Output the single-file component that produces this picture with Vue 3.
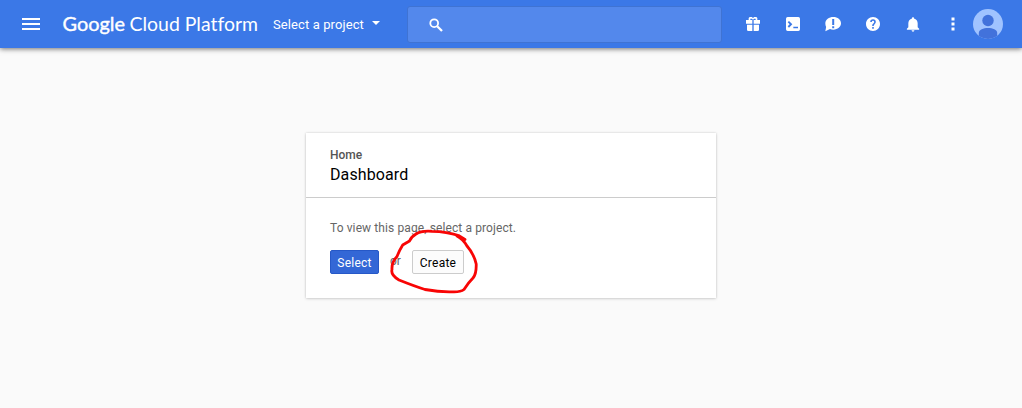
<script setup>
const actions = [
  { name: 'Gifts', path: 'M1.500 6H11v5.500H1.500zM13 6h9.500v5.500H13zM3 13h8v9.500H5a2 2 0 0 1-2-2zM13 13h8v7.500a2 2 0 0 1-2 2h-6zM5.500 6V3l1.500-1.500h3.500L12 3.500l1.500-2H17L18.500 3v3H16V4h-2.200L12 5.800 10.200 4H8v2z' },
  { name: 'Cloud Shell', path: 'M4 1.500h16A2.500 2.500 0 0 1 22.500 4v16a2.500 2.500 0 0 1-2.500 2.500H4A2.500 2.500 0 0 1 1.500 20V4A2.500 2.500 0 0 1 4 1.500zM4 9.500 7 12.500l-3 3 2 2 5-5-5-5zM12.500 16v2.500h7V16z' },
  { name: 'Feedback', path: 'M12.500 1.500C19 1.500 24 5.500 24 11s-5 9.500-11.500 9.500c-1.800 0-3.600-.2-5-.9L.5 23l1.200-6.500C.800 15 .5 13.200.5 11c0-5.500 5.500-9.500 12-9.500zM10.800 4.500v9h3v-9zM10.800 15.300v3h3v-3z' },
  { name: 'Help', path: 'M12 1.500C6.200 1.500 1.500 6.200 1.500 12S6.200 22.500 12 22.500 22.500 17.800 22.500 12 17.800 1.500 12 1.500zm1.200 17.500h-2.400v-2.400h2.400V19zm2.100-7.700-.9.900c-.8.800-1.200 1.400-1.200 2.800h-2.400v-.5c0-1.100.4-2.100 1.200-2.800l1.200-1.300c.4-.3.600-.8.600-1.400a1.800 1.800 0 0 0-3.600 0H7.800a4.200 4.200 0 1 1 8.400 0c0 .900-.4 1.700-.9 2.300z' },
  { name: 'Notifications', path: 'M12 23.500a2.200 2.200 0 0 0 2.200-2H9.800A2.200 2.200 0 0 0 12 23.500zM19 17v-6c0-3.400-2.100-6-5.200-6.800V3.500a1.800 1.800 0 0 0-3.600 0v.7C7.100 5 5 7.600 5 11v6l-2.200 2v1.500h18.400V19z' },
]
</script>

<template>
  <div class="page">
    <header class="topbar">
      <svg class="menu" viewBox="0 0 18 12" shape-rendering="crispEdges">
        <path d="M0 0h18v2H0zM0 5h18v2H0zM0 10h18v2H0z" fill="#fff" />
      </svg>
      <svg class="brand" viewBox="0 0 198 40">
        <text class="google" x=".5" y="26.500" textLength="62.500" lengthAdjust="spacingAndGlyphs">Google</text>
        <text class="cloud" x="67.500" y="26.500" textLength="128.500" lengthAdjust="spacingAndGlyphs">Cloud Platform</text>
      </svg>
      <div class="project">Select a project<span class="caret"></span></div>
      <div class="search">
        <svg viewBox="0 0 14 14">
          <circle cx="5.200" cy="5.200" r="3.900" fill="none" stroke="#fff" stroke-width="1.800" />
          <path d="M8.200 8.200 13 13" stroke="#fff" stroke-width="2.300" />
        </svg>
      </div>
      <nav class="actions">
        <svg v-for="a in actions" :key="a.name" viewBox="0 0 24 24" :aria-label="a.name">
          <path :d="a.path" fill="#fff" fill-rule="evenodd" />
        </svg>
      </nav>
      <svg class="more" viewBox="0 0 4 14">
        <path d="M.5.500h3v3h-3zM.5 5.500h3v3h-3zM.5 10.500h3v3h-3z" fill="#fff" />
      </svg>
      <svg class="avatar" viewBox="0 0 30 30">
        <defs><clipPath id="face"><circle cx="15" cy="15" r="15" /></clipPath></defs>
        <g clip-path="url(#face)">
          <path d="M0 0h30v30H0z" fill="#a0c3ff" />
          <circle cx="15" cy="11.500" r="5.700" fill="#4272db" />
          <path d="M5.800 30v-6c0-3.500 4.600-5 9.200-5s9.200 1.500 9.200 5v6z" fill="#4272db" />
        </g>
      </svg>
    </header>

    <main class="card">
      <div class="heading">
        <div class="crumb">Home</div>
        <h1>Dashboard</h1>
      </div>
      <div class="content">
        <p>To view this page, select a project.</p>
        <div class="buttons">
          <button class="primary">Select</button>
          <span class="or">or</span>
          <button class="secondary">Create</button>
        </div>
      </div>
      <svg class="mark" viewBox="0 0 110 80">
        <path d="M85 17.500 78.500 13.500Q67 9.500 52 9.300 41 8.500 36 12 31 15 29.500 19L22.700 23Q19 29 17 34.500 11.500 40 12 47.500 10.500 53 19 58 34 64 45 67.500 59 70 71 69.800 80 70.500 84 67.500 88 61 93 56 96.500 52 96.200 42 94 32 87 24 83 17 77 14" />
      </svg>
    </main>
  </div>
</template>

<style scoped>
.page {
  height: 408px;
  overflow: hidden;
  background: #fafafa;
  font-family: Roboto, sans-serif;
}
.topbar {
  position: relative;
  box-sizing: border-box;
  display: flex;
  align-items: center;
  height: 48px;
  padding-left: 22px;
  background: #3b78e7;
  color: #fff;
  box-shadow: 0 1px 5px rgba(0, 0, 0, 0.55);
}
.topbar > * {
  flex: none;
}
.menu {
  width: 18px;
  height: 12px;
}
.brand {
  width: 198px;
  height: 40px;
  margin-left: 22px;
  overflow: visible;
  fill: #fff;
  font-family: Lato, sans-serif;
  font-size: 20px;
  font-variant-ligatures: none;
}
.google {
  font-weight: 400;
  stroke: #fff;
  stroke-width: 0.4px;
}
.cloud {
  font-weight: 400;
}
.project {
  display: flex;
  align-items: center;
  width: 107px;
  margin-left: 13px;
  padding-top: 2px;
  font-size: 13px;
  letter-spacing: 0.1px;
  line-height: 18px;
  white-space: nowrap;
}
.caret {
  margin: -4px 0 0 8px;
  border: 4px solid transparent;
  border-top-color: #fff;
  border-bottom: 0;
}
.search {
  box-sizing: border-box;
  display: flex;
  align-items: center;
  width: 315px;
  height: 37px;
  margin-left: 27px;
  padding: 1px 0 0 21px;
  border: 1px solid #3f73d3;
  border-radius: 3px;
  background: #5388ec;
}
.search svg {
  width: 14px;
  height: 14px;
}
.actions {
  display: flex;
  gap: 24px;
  margin-left: 23px;
}
.actions svg {
  width: 16px;
  height: 16px;
}
.more {
  width: 4px;
  height: 14px;
  margin-left: 29.500px;
}
.avatar {
  width: 30px;
  height: 30px;
  margin-left: 18.500px;
}
.card {
  position: relative;
  width: 410px;
  height: 165px;
  margin: 85px 0 0 306px;
  background: #fff;
  box-shadow: 0 0 2px rgba(0, 0, 0, 0.16), 0 1px 3px rgba(0, 0, 0, 0.13);
}
.heading {
  box-sizing: border-box;
  height: 65px;
  padding: 14px 24px 0;
  border-bottom: 1px solid #ccc;
}
.crumb {
  color: #555;
  font-size: 12px;
  font-weight: 500;
  line-height: 16px;
}
h1 {
  margin: 2px 0 0;
  color: #000;
  font-size: 16px;
  font-weight: 400;
  letter-spacing: 0.1px;
  line-height: 20px;
}
.content {
  padding: 22px 24px 0;
  color: #666;
  font-size: 12px;
}
p {
  margin: 0 0 14px;
  letter-spacing: 0.1px;
  line-height: 16px;
}
.buttons {
  display: flex;
}
button {
  box-sizing: border-box;
  height: 24px;
  padding: 1px 0 0;
  border-radius: 2px;
  font: 400 12px/20px Roboto, sans-serif;
  letter-spacing: 0.25px;
}
.primary {
  width: 49px;
  border: 1px solid #2658c7;
  background: #3367d6;
  color: #fff;
}
.or {
  width: 33px;
  padding-left: 11px;
  box-sizing: border-box;
  line-height: 22px;
}
.secondary {
  width: 52px;
  border: 1px solid #ccc;
  background: #fcfcfc;
  color: #000;
}
.mark {
  position: absolute;
  left: 74px;
  top: 89px;
  width: 110px;
  height: 80px;
  fill: none;
  stroke: #f80505;
  stroke-width: 2.800px;
  stroke-linecap: round;
  stroke-linejoin: round;
}
</style>
